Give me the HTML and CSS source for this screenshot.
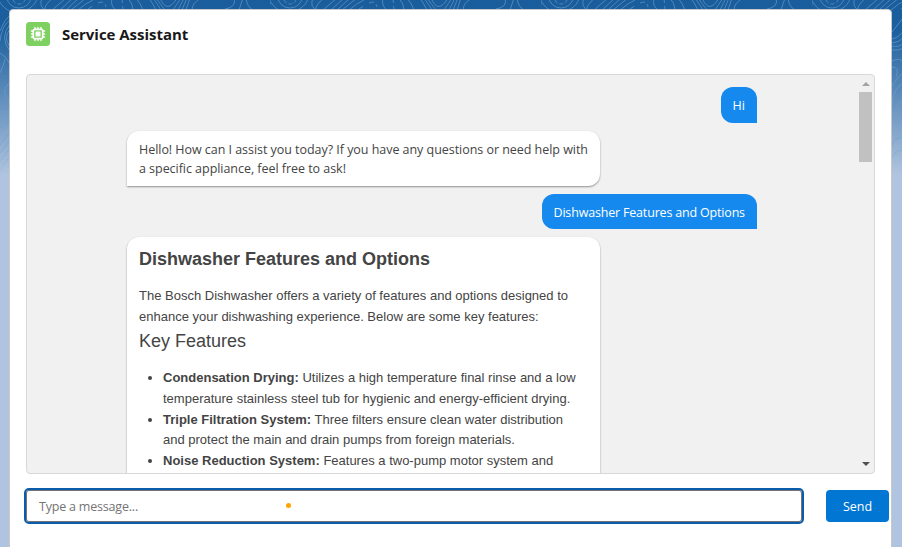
FILE: index.html
```html
<!DOCTYPE html>
<html lang="en">
<head>
<meta charset="utf-8">
<title>Service Assistant</title>
<link rel="stylesheet" href="styles.css">
</head>
<body>
<svg class="backdrop" width="902" height="180" aria-hidden="true">
  <defs>
    <linearGradient id="fade" x1="0" y1="0" x2="0" y2="1">
      <stop offset="0" stop-color="#fff"/><stop offset=".75" stop-color="#fff"/><stop offset="1" stop-color="#000"/>
    </linearGradient>
    <mask id="m"><rect width="902" height="180" fill="url(#fade)"/></mask>
    <pattern id="topo" width="271" height="180" patternUnits="userSpaceOnUse">
      <g fill="none" stroke="#6c9dcb" stroke-width=".9" stroke-opacity=".7">
        <ellipse cx="19" cy="-3" rx="12" ry="11"/>
        <ellipse cx="19" cy="-1" rx="6" ry="5" stroke-dasharray="4 2"/>
        <path d="M-2-2C1 7 10 14 20 12S36 4 37-2M42-2Q38 7 47 11M53-2Q44 5 45 10M52 10L66-2M60 10L73-2M66 10L79-2M71 10L86-2M78 10Q86 3 93 0M112-2Q110 6 116 10M128-2Q133 4 133 10M136-2Q141 4 143 10M149-2Q153 4 156 10M153-2Q158 5 161 10M156-2Q161 5 165 10M160-2Q167 15 177-2M173 10L181-2M178 10L184-2M182 10L187-2M186 10L190-2M192 10Q192 3 201-2M225 9Q237 7 234-2M239 10L243-2M246-2Q247 7 253 10M271-2Q270 7 274 10"/>
        <path d="M88 9L94 5M98 3Q105 0 106 7M122-2L123 10" stroke-dasharray="5 3"/>
        <path d="M0 31Q4 20 10 15M0 41Q2 25 10 20M10 24Q-1 38 10 51M10 29Q3 38 10 47M0 53Q6 56 10 64M0 73Q4 65 5 59M10 82Q-1 93 10 102M0 112Q9 108 10 117M0 119Q7 116 7 123T0 127M0 145L10 132M0 153L10 140M0 161L10 148M0 170L10 156"/>
        <path d="M79 32L90 18M79 39Q88 37 91 29M79 43Q86 43 91 37M79 46Q87 48 91 42M79 50Q87 51 91 47M79 61Q88 57 91 63M79 67Q87 67 83 77M79 86Q84 77 91 72M79 103Q81 87 91 82M79 119Q82 105 91 98M79 146Q81 136 91 138M79 157Q85 148 91 151"/>
      </g>
    </pattern>
  </defs>
  <rect width="902" height="180" fill="url(#topo)" mask="url(#m)"/>
</svg>
<main class="card">
  <header class="head">
    <svg class="logo" viewBox="0 0 24 24">
      <rect width="24" height="24" rx="3.5" fill="#7ed061"/>
      <g fill="none" stroke="#fff">
        <rect x="7.3" y="7.3" width="9.4" height="9.4" rx="1.4" stroke-width="1.7"/>
        <path stroke-width="1.3" stroke-linecap="round" d="M9 5.4V7M12 5.4V7M15 5.4V7M9 17v1.6M12 17v1.6M15 17v1.6M5.4 9H7M5.4 12H7M5.4 15H7M17 9h1.6M17 12h1.6M17 15h1.6"/>
      </g>
      <rect x="9.5" y="9.5" width="5" height="5" rx=".6" fill="#fff"/>
    </svg>
    <h1>Service Assistant</h1>
  </header>
  <section class="chat">
    <div class="messages">
      <div class="user">Hi</div>
      <div class="bot short">Hello! How can I assist you today? If you have any questions or need help with<br>a specific appliance, feel free to ask!</div>
      <div class="user second">Dishwasher Features and Options</div>
      <div class="bot rich">
        <h2>Dishwasher Features and Options</h2>
        <p>The Bosch Dishwasher offers a variety of features and options designed to<br>enhance your dishwashing experience. Below are some key features:</p>
        <h3>Key Features</h3>
        <ul>
          <li><b>Condensation Drying:</b> Utilizes a high temperature final rinse and a low<br>temperature stainless steel tub for hygienic and energy-efficient drying.</li>
          <li><b>Triple Filtration System:</b> Three filters ensure clean water distribution<br>and protect the main and drain pumps from foreign materials.</li>
          <li><b>Noise Reduction System:</b> Features a two-pump motor system and</li>
        </ul>
      </div>
    </div>
    <div class="scrollbar"><i class="up"></i><i class="thumb"></i><i class="down"></i></div>
  </section>
  <footer class="composer">
    <div class="field"><span class="placeholder">Type a message...</span><i class="dot"></i></div>
    <button>Send</button>
  </footer>
</main>
</body>
</html>
```
FILE: styles.css
```css
* { box-sizing: border-box; }
body {
  margin: 0;
  height: 547px;
  overflow: hidden;
  padding: 9px 10px 0 9px;
  background: linear-gradient(#195d9c 0, #1b5f9e 30px, #b0c4df 175px);
  font: 12.5px/19.5px "Open Sans", "Noto Sans", sans-serif;
  color: #444;
}
.backdrop { position: absolute; left: 0; top: 0; }
.card {
  position: relative;
  height: 560px;
  background: #fff;
  border: 1px solid #c9c9c9;
  border-radius: 4px;
}
.head { display: flex; align-items: center; gap: 12px; height: 48px; padding-left: 16px; }
.logo { width: 24px; height: 24px; }
h1 { margin: 0; font-size: 15px; line-height: 24px; font-weight: 700; color: #181818; letter-spacing: -.03px; }
.chat {
  display: flex;
  justify-content: space-between;
  width: 849px;
  height: 400px;
  margin: 16px 0 0 16px;
  border: 1px solid #d8d8d8;
  border-radius: 4px;
  background: #f1f1f1;
  overflow: hidden;
}
.messages { display: flex; flex-direction: column; align-items: flex-start; width: 630px; margin-left: 100px; padding-top: 12px; }
.user {
  align-self: flex-end;
  width: 36px;
  height: 36px;
  padding-left: 11.5px;
  line-height: 37px;
  font-weight: 500;
  color: #fff;
  background: #1589ee;
  border-radius: 12px 12px 0 12px;
  white-space: nowrap;
}
.user.second { width: 215px; height: 35px; margin-top: 8px; letter-spacing: -.18px; }
.bot {
  width: 473px;
  padding: 9px 12px;
  background: #fff;
  border-radius: 12px 12px 12px 0;
  box-shadow: 0 1px 2px rgba(0, 0, 0, .4);
  white-space: nowrap;
}
.short { height: 55px; margin-top: 8px; line-height: 19px; letter-spacing: -.04px; }
.rich {
  flex: none;
  height: 280px;
  margin-top: 8px;
  padding-top: 11px;
  font: 13px/20.8px "Liberation Sans", sans-serif;
}
h2 { margin: 0 0 15px; font-size: 18px; line-height: 23px; font-weight: 700; }
p { margin: 0; }
h3 { margin: 2px 0 16.4px; font-size: 18px; line-height: 22px; font-weight: 400; }
ul { margin: 0; padding-left: 24px; }
.scrollbar { display: flex; flex-direction: column; align-items: center; width: 17px; padding: 7px 0 7px; }
.up { border: 4px solid transparent; border-top: 0; border-bottom: 4px solid #a3a3a3; }
.thumb { width: 13px; height: 70px; margin-top: 6px; background: #c1c1c1; }
.down { margin-top: auto; border: 4px solid transparent; border-bottom: 0; border-top: 4px solid #505050; }
.composer { display: flex; align-items: center; gap: 22px; margin: 14px 0 0 14px; }
.field {
  display: flex;
  align-items: center;
  width: 780px;
  height: 36px;
  padding-left: 13px;
  border: 2px solid #0b5cab;
  border-radius: 5px;
  box-shadow: inset 0 0 0 1px #747474;
  color: #747474;
}
.placeholder { width: 100px; padding-top: 2px; letter-spacing: -.2px; white-space: nowrap; }
.dot { width: 5px; height: 5px; margin: 0 0 2px 147px; border-radius: 50%; background: #ffa500; }
button {
  width: 63px;
  height: 32px;
  padding: 1px 0 0;
  border: 0;
  border-radius: 4px;
  background: #0176d3;
  color: #fff;
  font: inherit;
}
```
